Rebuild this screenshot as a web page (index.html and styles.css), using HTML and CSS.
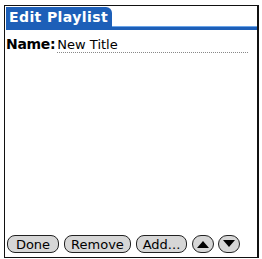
FILE: index.html
```html
<!DOCTYPE html>
<html>
<head>
<meta charset="utf-8">
<link rel="stylesheet" href="styles.css">
</head>
<body>
<div class="screen">
  <div class="titlebar">
    <div class="tab">Edit Playlist</div>
  </div>
  <div class="field">
    <span class="label">Name:</span>
    <span class="value">New Title</span>
  </div>
  <div class="spacer"></div>
  <div class="buttons">
    <button class="btn btn-done">Done</button>
    <button class="btn btn-remove">Remove</button>
    <button class="btn btn-add">Add...</button>
    <button class="btn arrow"><svg width="14" height="10" viewBox="0 0 14 10"><path d="M1 9 L7 2 L13 9 Z" fill="#000"/></svg></button>
    <button class="btn arrow"><svg width="14" height="10" viewBox="0 0 14 10"><path d="M1 1 L13 1 L7 8 Z" fill="#000"/></svg></button>
  </div>
</div>
</body>
</html>
```
FILE: styles.css
```css
html, body {
  margin: 0;
  padding: 0;
  background: #fff;
}
.screen {
  margin: 5px 0 0 4px;
  width: 251px;
  height: 250px;
  border: 1px solid #111;
  border-right-width: 2px;
  display: flex;
  flex-direction: column;
  padding: 1px 0 0 1px;
  font-family: "DejaVu Sans", sans-serif;
}
.titlebar {
  display: flex;
  border-bottom: 3px solid #1d5fb8;
  box-shadow: inset 0 -1px 0 #6aa4e8;
}
.tab {
  background: #1d5fb8;
  color: #fff;
  font-weight: bold;
  font-size: 14px;
  line-height: 20px;
  padding: 0 4px 0 3px;
  border-radius: 0 6px 0 0;
  letter-spacing: 0.4px;
}
.field {
  display: flex;
  align-items: baseline;
  margin-top: 6px;
  margin-right: 9px;
}
.label {
  font-weight: bold;
  font-size: 14px;
  color: #000;
  letter-spacing: -0.3px;
}
.value {
  flex: 1;
  margin-left: 2px;
  font-size: 13px;
  color: #000;
  border-bottom: 1px dotted #888;
  line-height: 15px;
}
.spacer {
  flex: 1;
}
.buttons {
  display: flex;
  gap: 5px;
  padding: 0 0 4px 1px;
}
.btn {
  height: 18px;
  border: 1px solid #222;
  border-radius: 8px;
  background: #d6d6d6;
  font-family: "DejaVu Sans", sans-serif;
  font-size: 13px;
  color: #000;
  padding: 0 4px;
  margin: 0;
  line-height: 15px;
  display: flex;
  align-items: center;
  justify-content: center;
}
.btn-done { width: 52px; }
.btn-remove { width: 67px; }
.btn-add { width: 51px; }
.arrow {
  width: 22px;
  padding: 0;
  border-radius: 9px;
}
.arrow + .arrow { margin-left: -1px; }
```
